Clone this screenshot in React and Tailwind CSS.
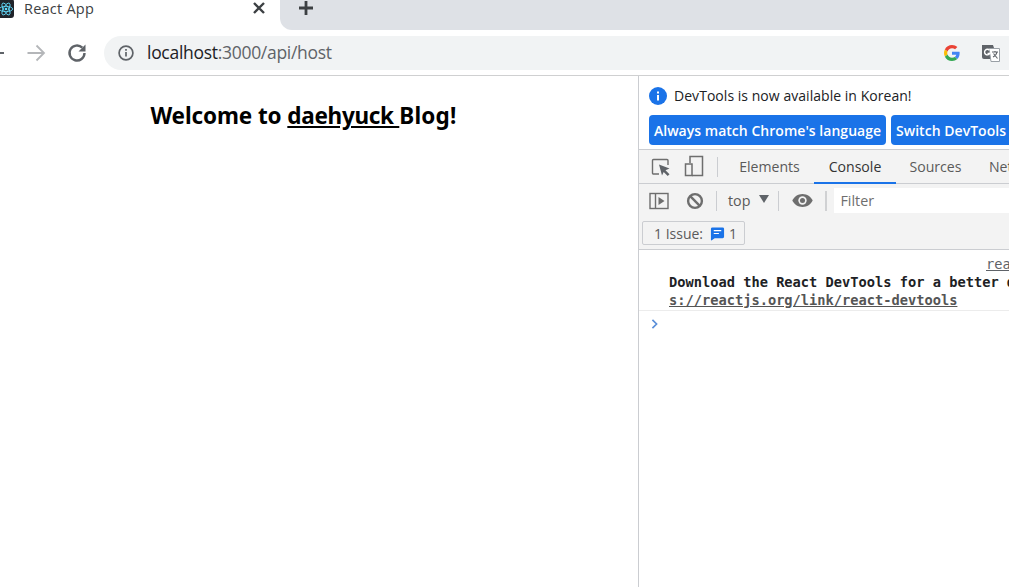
import React from "react";

const ui = { fontFamily: '"Open Sans", "Noto Sans", sans-serif' };
const mono = { fontFamily: '"DejaVu Sans Mono", monospace' };

function ReactIcon() {
  return (
    <div className="w-[16px] h-[19px] -ml-[2px] -mt-[2px] bg-[#20232a] rounded-[3px] flex items-center justify-center shrink-0">
      <svg viewBox="-12 -12 24 24" className="w-[16px] h-[16px]" fill="none" stroke="#61dafb" strokeWidth="1.3">
        <circle r="2" fill="#61dafb" stroke="none" />
        <ellipse rx="10" ry="4" />
        <ellipse rx="10" ry="4" transform="rotate(60)" />
        <ellipse rx="10" ry="4" transform="rotate(120)" />
      </svg>
    </div>
  );
}

function GoogleG() {
  return (
    <svg viewBox="0 0 48 48" className="w-[16px] h-[16px]">
      <path fill="#EA4335" d="M24 9.5c3.5 0 6.700 1.200 9.200 3.600l6.900-6.900C35.900 2.400 30.500 0 24 0 14.600 0 6.500 5.400 2.600 13.200l8 6.200C12.500 13.600 17.800 9.500 24 9.500z" />
      <path fill="#4285F4" d="M46.900 24.500c0-1.600-.1-3.100-.4-4.500H24v9h12.900c-.6 3-2.200 5.500-4.800 7.200l7.700 6c4.500-4.200 7.100-10.300 7.100-17.700z" />
      <path fill="#FBBC05" d="M10.500 28.600c-.5-1.400-.8-3-.8-4.600s.3-3.200.8-4.600l-8-6.200C.9 16.500 0 20.100 0 24s.9 7.500 2.600 10.800l7.900-6.200z" />
      <path fill="#34A853" d="M24 48c6.500 0 11.900-2.100 15.900-5.800l-7.700-6c-2.200 1.400-4.900 2.300-8.200 2.300-6.200 0-11.500-4.200-13.400-9.800l-8 6.200C6.500 42.600 14.600 48 24 48z" />
    </svg>
  );
}

function TranslateIcon() {
  return (
    <svg viewBox="0 0 20 20" className="w-[20px] h-[20px]">
      <path fill="#5f6368" d="M1 2h11l1 3v11H3a2 2 0 0 1-2-2z" />
      <path fill="#fff" stroke="#9aa0a6" strokeWidth="1" d="M8 5.500h10.500v13H10z" />
      <path fill="none" stroke="#fff" strokeWidth="1.400" d="M8.500 7.300A2.800 2.800 0 1 0 8.800 10.500H6.500" />
      <path fill="none" stroke="#5f6368" strokeWidth="1.100" d="M11 9h6M14 8v1M16 9c-.5 2.500-2 4-4 5M12.500 10.500l4 5" />
    </svg>
  );
}

function Toolbar() {
  return (
    <div className="h-[46px] flex items-center bg-white border-b border-[#cfd0d1] shrink-0">
      <svg viewBox="0 0 20 20" className="w-[20px] h-[20px] -ml-[14px] shrink-0" fill="none" stroke="#5f6368" strokeWidth="2">
        <path d="M18 10H3M10 3l-7 7 7 7" />
      </svg>
      <svg viewBox="0 0 20 20" className="w-[20px] h-[20px] ml-[20px] shrink-0" fill="none" stroke="#b4b6b9" strokeWidth="1.800">
        <path d="M1.500 10H18M10.500 2.500 18 10l-7.500 7.500" />
      </svg>
      <svg viewBox="0 0 24 24" className="w-[24px] h-[24px] ml-[19px] shrink-0" fill="none" stroke="#5f6368" strokeWidth="2.400">
        <path d="M19.500 12a7.500 7.500 0 1 1-2.200-5.300" />
        <path fill="#5f6368" stroke="none" d="M20.500 3.500v7h-7z" />
      </svg>
      <div className="ml-[15px] flex-1 h-[34px] bg-[#f1f3f4] rounded-l-full flex items-center min-w-0 mt-[1px]">
        <svg viewBox="0 0 16 16" className="w-[16px] h-[16px] ml-[14px] shrink-0" fill="none" stroke="#5f6368" strokeWidth="1.700">
          <circle cx="8" cy="8" r="6.900" />
          <path d="M8 7v4.500M8 4v1.800" />
        </svg>
        <span className="ml-[13px] text-[17.500px] text-[#202124] tracking-[-0.29px] -mt-[1px]" style={ui}>
          localhost<span className="text-[#5f6368]">:3000/api/host</span>
        </span>
        <div className="ml-auto flex items-center gap-[21px] pr-[8px]">
          <GoogleG />
          <TranslateIcon />
        </div>
      </div>
    </div>
  );
}

function TabStrip() {
  return (
    <div className="h-[30px] flex bg-white shrink-0">
      <div className="w-[280px] flex items-start pt-[1px]">
        <ReactIcon />
        <span className="ml-[10px] text-[14.500px] leading-[15px] text-[#3c4043] tracking-[0.23px]" style={ui}>React App</span>
        <svg viewBox="0 0 12 12" className="w-[12px] h-[12px] ml-auto mr-[15px] mt-[1px]" stroke="#3c4043" strokeWidth="2.400">
          <path d="M1 1l10 10M11 1 1 11" />
        </svg>
      </div>
      <div className="flex-1 bg-[#dee1e6] rounded-bl-[12px]">
        <svg viewBox="0 0 16 16" className="w-[16px] h-[16px] ml-[18px]" stroke="#3c4043" strokeWidth="2.800">
          <path d="M8 1v14M1 8h14" />
        </svg>
      </div>
    </div>
  );
}

function DevTools() {
  return (
    <div className="flex-1 min-w-0 border-l border-[#cbcdd1] flex flex-col overflow-hidden text-[#303942]" style={ui}>
      <div className="h-[74px] px-[10px] shrink-0 border-b border-[#cbcdd1]">
        <div className="h-[39px] flex items-center">
          <svg viewBox="0 0 18 18" className="w-[18px] h-[18px] shrink-0">
            <circle cx="9" cy="9" r="9" fill="#1a73e8" />
            <path d="M9 8v5.500M9 4.500v2" stroke="#fff" strokeWidth="2" />
          </svg>
          <span className="ml-[7px] text-[14px] text-[#202124] whitespace-nowrap tracking-[0.04px]">DevTools is now available in Korean!</span>
        </div>
        <div className="flex gap-[5px]">
          <button className="w-[237px] h-[30px] shrink-0 bg-[#1a73e8] rounded-[4px] text-white font-semibold text-[14px] whitespace-nowrap tracking-[0.03px] pt-[1px]">Always match Chrome's language</button>
          <button className="h-[30px] shrink-0 bg-[#1a73e8] rounded-[4px] text-white font-semibold text-[14px] whitespace-nowrap pl-[5px] text-left w-[200px] tracking-[0.03px] pt-[1px]">Switch DevTools to Korean</button>
        </div>
      </div>
      <div className="h-[34px] bg-[#f3f3f3] border-b border-[#cbcdd1] flex items-stretch shrink-0">
        <div className="flex items-center pl-[12px] shrink-0">
          <svg viewBox="0 0 20 20" className="w-[20px] h-[20px]" fill="none" stroke="#6e6e6e" strokeWidth="1.400">
            <path d="M8 17H2.500a1 1 0 0 1-1-1V3.500a1 1 0 0 1 1-1H16a1 1 0 0 1 1 1V8" />
            <path fill="#5f6368" stroke="none" d="M8 7.500l10.500 4-4 1.700 4 4-1.800 1.800-4-4L11 18.500z" />
          </svg>
          <svg viewBox="0 0 20 22" className="w-[20px] h-[22px] ml-[13px] -mt-[2px]" fill="none" stroke="#6e6e6e" strokeWidth="1.500">
            <path d="M6 8V1.500h12.500v19H8" />
            <rect x="1.500" y="9" width="6.500" height="11.500" />
          </svg>
          <div className="w-px h-[20px] bg-[#cbcdd1] ml-[13px]" />
        </div>
        <div className="flex text-[14.100px] text-[#5a5a5a] ml-[7px] whitespace-nowrap">
          <div className="w-[89px] flex items-center justify-center">Elements</div>
          <div className="w-[82px] flex items-center justify-center text-[#333] border-b-2 border-[#1a73e8] -mb-px pt-[1px]">Console</div>
          <div className="w-[79px] flex items-center justify-center">Sources</div>
          <div className="flex items-center pl-[14px]">Network</div>
        </div>
      </div>
      <div className="h-[33px] bg-[#f3f3f3] flex items-center shrink-0 pl-[10px]">
        <svg viewBox="0 0 20 18" className="w-[20px] h-[18px] shrink-0" fill="none" stroke="#6e6e6e" strokeWidth="1.400">
          <rect x="1" y="1.500" width="18" height="15" />
          <path d="M6.500 1.500v15" />
          <path fill="#6e6e6e" stroke="none" d="M9.500 5l6 4-6 4z" />
        </svg>
        <svg viewBox="0 0 18 18" className="w-[18px] h-[18px] ml-[17px] shrink-0" fill="none" stroke="#6e6e6e" strokeWidth="2.400">
          <circle cx="9" cy="9" r="6.900" />
          <path d="M4.200 4.200l9.600 9.600" />
        </svg>
        <div className="w-px h-[20px] bg-[#cbcdd1] ml-[12px]" />
        <span className="ml-[11px] text-[14.300px] text-[#5a5a5a]">top</span>
        <svg viewBox="0 0 10 8" className="w-[10px] h-[8px] ml-[9px] -mt-[3px]"><path d="M0 0h10L5 8z" fill="#5f6368" /></svg>
        <div className="w-px h-[20px] bg-[#cbcdd1] ml-[9px]" />
        <svg viewBox="0 0 22 14" className="w-[21px] h-[13px] ml-[13px] shrink-0">
          <path fill="#6e6e6e" d="M11 0C6 0 2 3 0 7c2 4 6 7 11 7s9-3 11-7c-2-4-6-7-11-7z" />
          <circle cx="11" cy="7" r="4.500" fill="#f3f3f3" />
          <circle cx="11" cy="7" r="2.700" fill="#6e6e6e" />
        </svg>
        <div className="w-[2px] h-[20px] bg-[#d0d1d3] ml-[12px]" />
        <div className="ml-[7px] flex-1 h-[25px] -mt-[1px] bg-white flex items-center pl-[6px] pt-[2px] text-[14.300px] text-[#6e6e6e]">Filter</div>
      </div>
      <div className="h-[33px] bg-[#f3f3f3] border-b border-[#cbcdd1] flex items-start shrink-0 pl-[3px] pt-[4px]">
        <div className="h-[24px] w-[103px] border border-[#cbcdd1] rounded-[2px] flex items-center pl-[11px] text-[14px] text-[#5a5a5a]">
          <span>1 Issue:</span>
          <svg viewBox="0 0 16 16" className="w-[15px] h-[15px] ml-[7px]">
            <path fill="#1a73e8" d="M2.500 1.500h11a1.500 1.500 0 0 1 1.500 1.500v8.500a1.500 1.500 0 0 1-1.500 1.500H5l-3.500 2.500a.5.5 0 0 1-.5-.5V3a1.500 1.500 0 0 1 1.500-1.500z" />
            <path stroke="#fff" strokeWidth="1.300" d="M4 5h8M4 8h5.500" />
          </svg>
          <span className="ml-[4px]">1</span>
        </div>
      </div>
      <div className="h-[61px] bg-white border-b border-[#ececec] relative shrink-0 text-[13.700px] leading-[18px] font-bold whitespace-nowrap overflow-hidden pt-[23px] pl-[30px] text-[#202124]" style={mono}>
        <a className="absolute top-[5px] left-[347px] font-normal text-[#5f6368] underline">react_devtools_backend.js:4049</a>
        <div>Download the React DevTools for a better development experience: http</div>
        <div className="text-[#555] underline">s://reactjs.org/link/react-devtools</div>
      </div>
      <div className="pl-[12px] pt-[8px]">
        <svg viewBox="0 0 8 12" className="w-[7px] h-[10px]" fill="none" stroke="#5b8fd9" strokeWidth="2">
          <path d="M1.500 1 6.500 6l-5 5" />
        </svg>
      </div>
    </div>
  );
}

export default function App() {
  return (
    <div className="w-[1009px] h-[587px] overflow-hidden flex flex-col bg-white">
      <TabStrip />
      <Toolbar />
      <div className="flex-1 flex min-h-0">
        <div className="w-[638px] shrink-0 text-center pt-[25px] pr-[31px]">
          <h1 className="text-[22.500px] leading-[30px] font-bold text-black tracking-[-0.1px]" style={{ fontFamily: '"Noto Sans", sans-serif' }}>
            Welcome to <a className="underline tracking-[-0.3px]">daehyuck </a><span className="tracking-[0.2px]">Blog!</span>
          </h1>
        </div>
        <DevTools />
      </div>
    </div>
  );
}
